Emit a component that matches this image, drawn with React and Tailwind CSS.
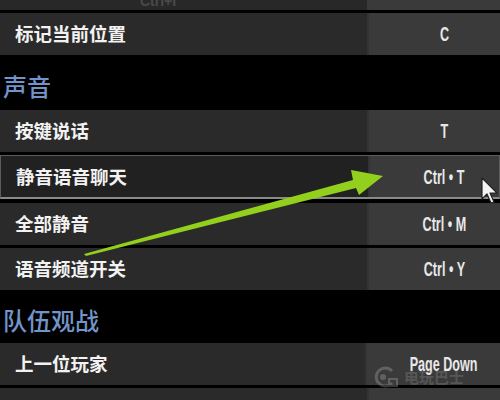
import React from "react";

const KeyRow = ({ label, keyText, active }) => (
  <div
    className={
      "flex h-[42px] shrink-0 " +
      (active ? "h-[44px] border border-[#5c5c5c] border-b-2 border-b-[#8a8a8a]" : "")
    }
  >
    <div
      className={
        "flex w-[367px] items-center pl-[15px] text-[18.5px] font-bold text-[#f2f2f2] " +
        (active ? "bg-[#212121]" : "bg-[#2a2a2a]")
      }
    >
      {label}
    </div>
    <div className="flex flex-1 items-center justify-center bg-[#3a3a3a] pl-5 border-l-2 border-[#333]">
      <span className="inline-block scale-x-[0.6] whitespace-nowrap font-['Liberation_Sans',sans-serif] text-[21px] font-bold text-[#e8e8e8]">
        {keyText}
      </span>
    </div>
  </div>
);

const Section = ({ title, h }) => (
  <div className={"flex shrink-0 items-center pl-[3px] pt-1.5 text-[24px] font-medium text-[#7394c9] " + h}>
    {title}
  </div>
);

export default function App() {
  return (
    <div className="relative h-[400px] w-[500px] overflow-hidden bg-black font-['Noto_Sans_CJK_SC','Noto_Sans',sans-serif]">
      <div className="flex flex-col">
        {/* partial row cut at the top */}
        <div className="flex h-[10px] shrink-0 overflow-hidden">
          <div className="w-[367px] bg-[#282828] pl-[140px]">
            <span className="-mt-[9px] block font-['Liberation_Sans',sans-serif] text-[14px] font-bold text-[#4a4a4a]">Ctrl+I</span>
          </div>
          <div className="flex-1 bg-[#3a3a3a]" />
        </div>
        <div className="h-[3px] shrink-0" />
        <KeyRow label="标记当前位置" keyText="C" />
        <Section title="声音" h="h-[55px]" />
        <KeyRow label="按键说话" keyText="T" />
        <div className="h-[3px] shrink-0" />
        <KeyRow label="静音语音聊天" keyText="Ctrl • T" active />
        <div className="h-[4px] shrink-0" />
        <KeyRow label="全部静音" keyText="Ctrl • M" />
        <div className="h-[3px] shrink-0" />
        <KeyRow label="语音频道开关" keyText="Ctrl • Y" />
        <Section title="队伍观战" h="h-[53px]" />
        <KeyRow label="上一位玩家" keyText="Page Down" />
        <div className="h-[3px] shrink-0" />
        <KeyRow label="" keyText="" />
      </div>

      {/* faint watermark */}
      <div className="absolute left-[372px] top-[366px] flex items-center gap-1 opacity-30">
        <svg width="28" height="22" viewBox="0 0 28 22">
          <path d="M20 5 A9 9 0 1 0 20 17" fill="none" stroke="#bbb" strokeWidth="3" />
          <circle cx="11" cy="11" r="3" fill="#bbb" />
          <path d="M17 13 h8 v7 h-8 z" fill="none" stroke="#bbb" strokeWidth="2" />
        </svg>
        <span className="text-[15px] font-bold text-[#999]">电玩巴士</span>
      </div>

      {/* green annotation arrow */}
      <svg className="absolute left-0 top-0" width="500" height="400" viewBox="0 0 500 400">
        <polygon
          points="84,254 353,180 351,170 383,176 359,195 356,188 86,256"
          fill="#93cf1d"
        />
      </svg>

      {/* mouse cursor */}
      <svg className="absolute left-[481px] top-[177px]" width="20" height="28" viewBox="0 0 20 28">
        <path
          d="M1 1 L1 22 L6 17 L10 26 L13 25 L9 16 L16 16 Z"
          fill="#f4f4f4"
          stroke="#222"
          strokeWidth="1.2"
          strokeLinejoin="round"
        />
      </svg>
    </div>
  );
}
